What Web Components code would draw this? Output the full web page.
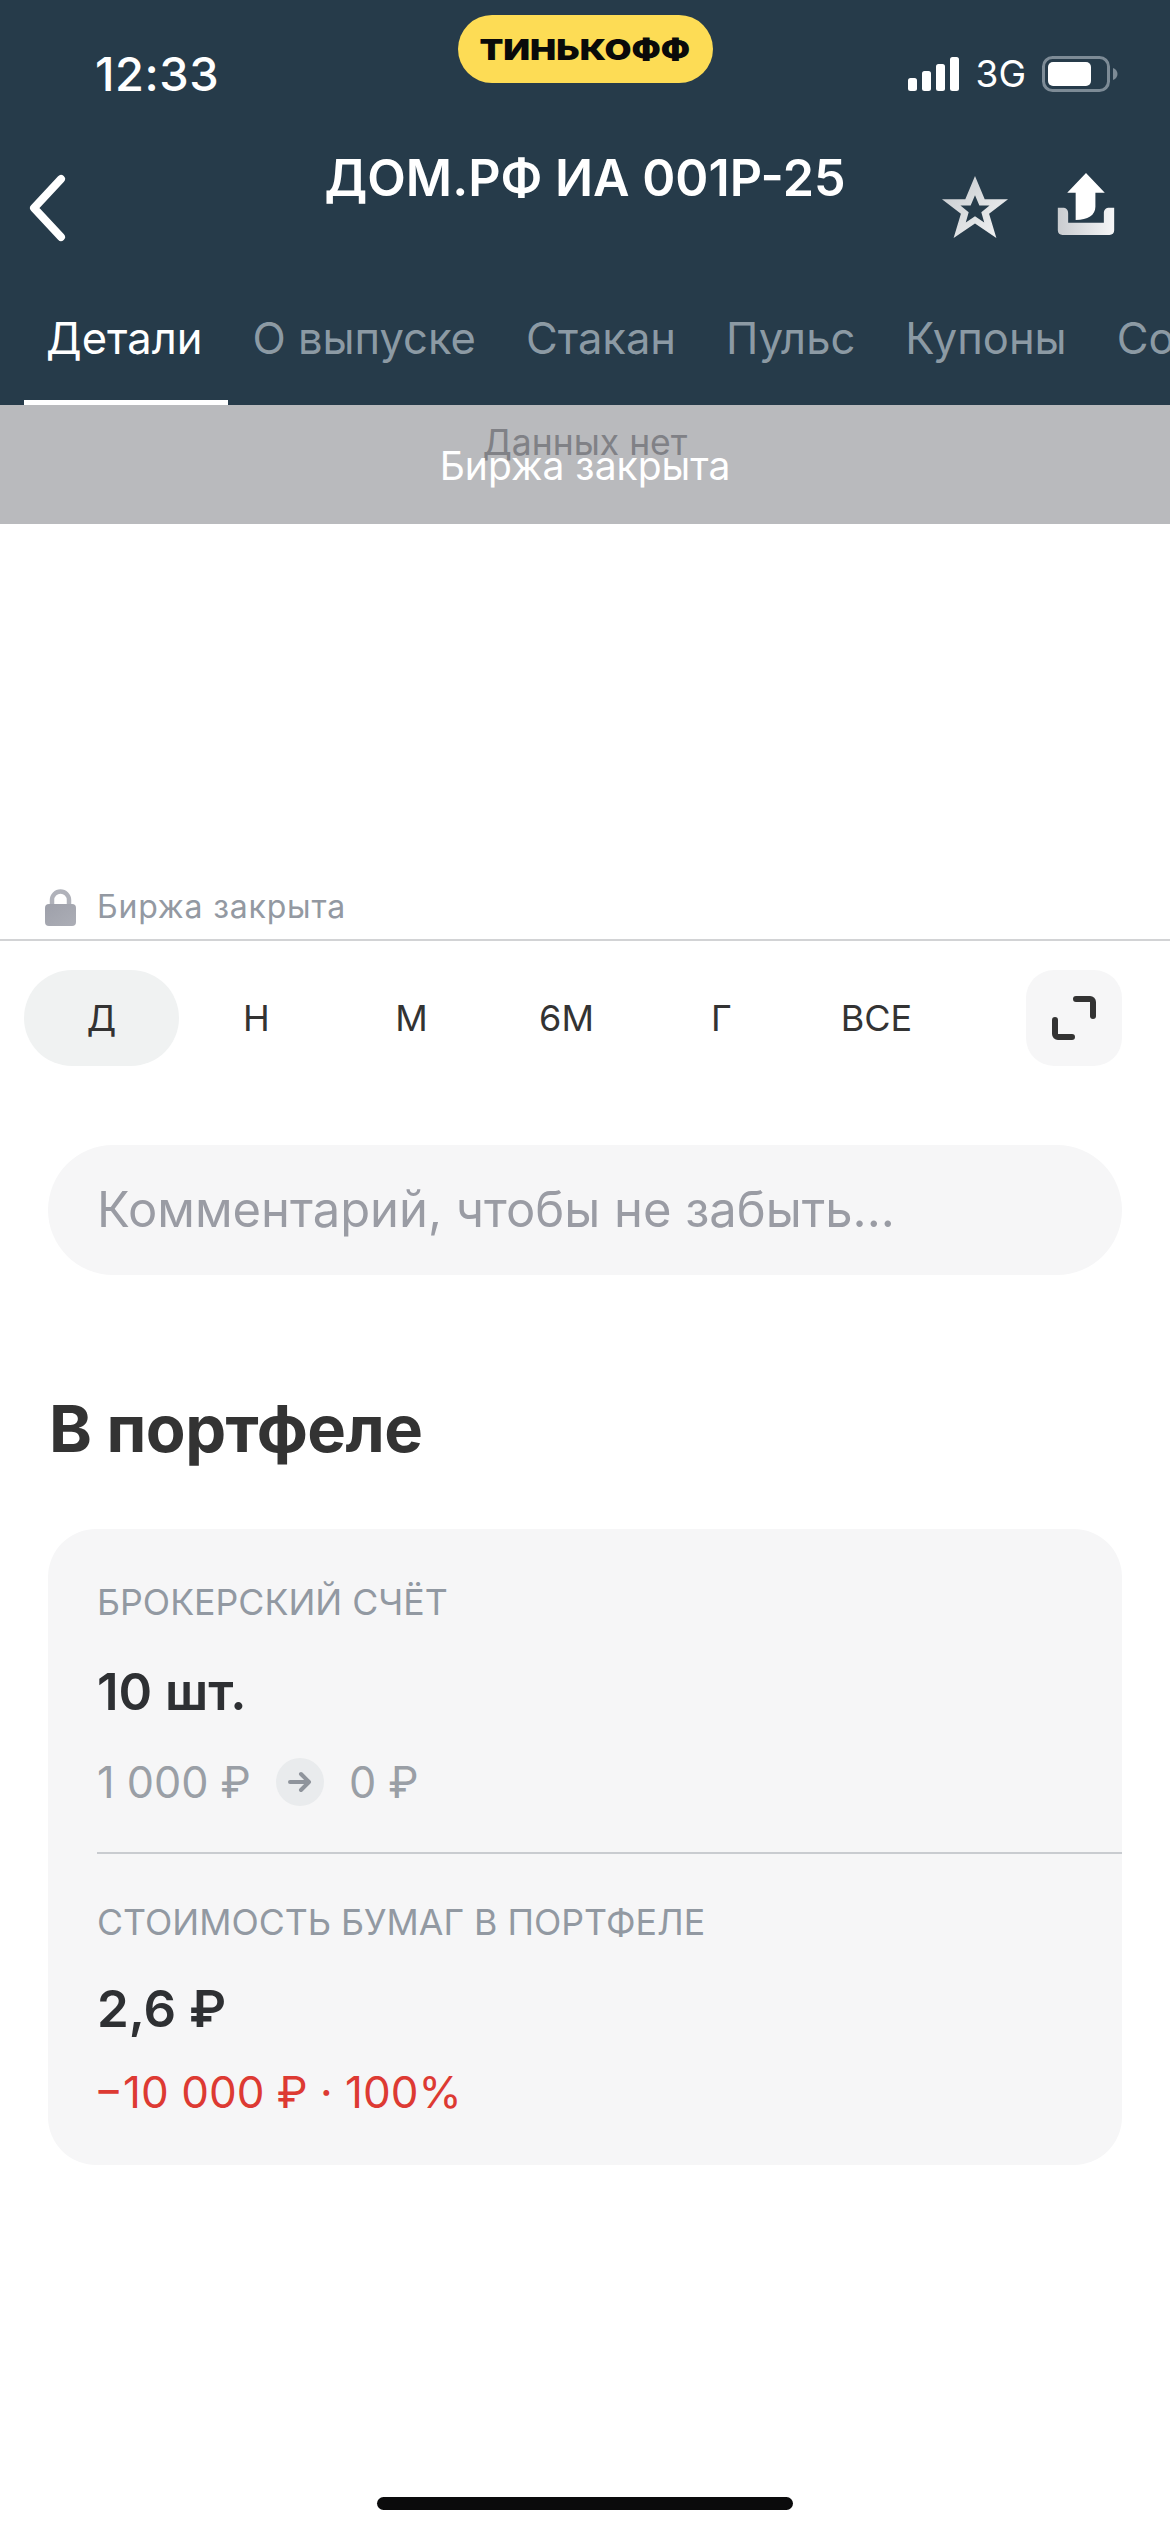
<!DOCTYPE html>
<html lang="ru"><head><meta charset="utf-8"><title>ДОМ.РФ ИА 001Р-25</title>
<style>
html,body{margin:0;padding:0;background:#fff}
body{width:1170px;height:2532px;overflow:hidden;font-family:Inter,"Noto Sans",sans-serif;display:flex;flex-direction:column}
</style></head><body>
<app-header></app-header>
<market-banner></market-banner>
<chart-footer></chart-footer>
<period-picker></period-picker>
<comment-field></comment-field>
<portfolio-section></portfolio-section>
<home-indicator></home-indicator>
<script>
const def=(name,html)=>customElements.define(name,class extends HTMLElement{
  constructor(){super();this.attachShadow({mode:'open'}).innerHTML=html}
});
def('status-bar',`<style>
:host{display:grid;grid-template-columns:1fr 255px 1fr;height:100px;color:#fff}
.t{font:500 47px/54px Inter,sans-serif;margin:47px 0 0 95px;letter-spacing:.5px}
.pill{margin-top:15px;height:68px;border-radius:34px;background:#fddc55;color:#0a0a0a;display:flex;align-items:center;justify-content:center;font:900 29px/1 Inter,sans-serif;letter-spacing:0}
.pill span{display:inline-block;transform:scaleX(1.2)}
.r{display:flex;justify-content:flex-end;align-items:flex-start;padding:56px 52px 0 0}
.g{font:400 37px/38px Inter,sans-serif;margin:-1px 16px 0 17px}
svg{display:block}
</style>
<div class="t">12:33</div><div class="pill"><span>ТИНЬКОФФ</span></div>
<div class="r"><svg width="51" height="36" viewBox="0 0 51 36"><g fill="#fff"><rect x="0" y="22" width="9" height="13" rx="2.5"/><rect x="14" y="15" width="9" height="20" rx="2.5"/><rect x="28" y="8" width="9" height="27" rx="2.5"/><rect x="42" y="1" width="9" height="34" rx="2.5"/></g></svg>
<span class="g">3G</span>
<svg width="76" height="36" viewBox="0 0 76 36"><rect x="1.5" y="1.5" width="65" height="33" rx="9" fill="none" stroke="#7d8b96" stroke-width="3"/><rect x="6" y="6" width="43" height="24" rx="5" fill="#fff"/><path d="M71 12c3 1 4.500 3.500 4.500 6s-1.500 5-4.500 6z" fill="#7d8b96"/></svg></div>`);
def('nav-bar',`<style>
:host{display:block;position:relative;height:200px;color:#fff}
h1{margin:0;text-align:center;font:600 50.200px/60px Inter,sans-serif;padding-top:48px}
.back,.act{position:absolute;display:block}
.back{left:26px;top:72px}.star{left:941px;top:74px}.up{left:1055px;top:73px}
</style><svg class="back act" width="44" height="72" viewBox="0 0 44 72"><path d="M35 7 8 36l27 29" fill="none" stroke="#fff" stroke-width="8" stroke-linecap="round" stroke-linejoin="round"/></svg>
<h1>ДОМ.РФ ИА 001Р-25</h1>
<svg class="star act" width="68" height="66" viewBox="0 0 70 66"><defs><linearGradient id="g1" x1="0" x2="1" y1="0" y2="1"><stop offset="0" stop-color="#c4c8cc"/><stop offset="1" stop-color="#f4f5f6"/></linearGradient></defs><path fill="url(#g1)" fill-rule="evenodd" d="M35 1l10 24h24L49.500 40 57 65 35 50 13 65l7.500-25L1 25h24zM35 21l-4.500 10.500H20l8.500 7-3 10.500 9.500-6.500 9.500 6.500-3-10.500 8.500-7H39.500z"/></svg>
<svg class="up act" width="62" height="62" viewBox="0 0 64 66"><defs><linearGradient id="g2" x1="0" x2="1"><stop offset="0" stop-color="#c9ccd0"/><stop offset="1" stop-color="#f5f6f7"/></linearGradient></defs><path fill="#fff" d="M32 0 52 21H42v15c0 9-8 14-21 14V21H12z"/><path fill="url(#g2)" d="M2 37h5c4 0 6 2 6 6v10h38V43c0-4 2-6 6-6h5v24c0 3-2 5-5 5H7c-3 0-5-2-5-5z"/></svg>`);
def('tab-item',`<style>
:host{display:block;height:105px;padding:0 26px 0 22px;flex:none;box-sizing:border-box;font:400 43.5px/76px Inter,sans-serif;color:#8c9aa4;white-space:nowrap}
:host([active]){color:#fff;box-shadow:inset 0 -5px 0 #fff}
</style><slot></slot>`);
def('tab-bar',`<style>:host{display:flex;gap:2px;padding:0 0 0 24px;overflow:hidden;height:105px}</style><slot></slot>`);
def('app-header',`<style>:host{display:block;background:#263b4a;height:405px;flex:none}</style>
<status-bar></status-bar><nav-bar></nav-bar>
<tab-bar><tab-item active>Детали</tab-item><tab-item>О выпуске</tab-item><tab-item>Стакан</tab-item><tab-item>Пульс</tab-item><tab-item>Купоны</tab-item><tab-item>Со</tab-item></tab-bar>`);
def('market-banner',`<style>
:host{display:flex;position:relative;justify-content:center;align-items:center;height:119px;background:#b9babd;flex:none;color:#fff;font:400 39px/44px Inter,sans-serif}
.u{position:absolute;left:0;right:0;top:16px;text-align:center;color:#808186;font-size:35.500px}
.o{position:relative;top:1px}
</style><div class="u">Данных нет</div><div class="o">Биржа закрыта</div>`);
def('chart-footer',`<style>
:host{display:flex;align-items:flex-end;gap:21px;height:417px;box-sizing:border-box;padding:0 0 12px 45px;border-bottom:2px solid #d2d3d5;flex:none;color:#9399a2;font:400 32px/40px Inter,sans-serif;letter-spacing:.8px}
svg{display:block;margin-bottom:1px}
</style><svg width="31" height="37" viewBox="0 0 31 37"><defs><linearGradient id="l" x1="0" x2="1" y1="0" y2="1"><stop offset="0" stop-color="#9ea0aa"/><stop offset="1" stop-color="#acaeb6"/></linearGradient></defs><path d="M7 17V11a8.500 8.500 0 0 1 17 0v6" fill="none" stroke="#b0b2ba" stroke-width="4.500"/><rect x="0" y="15" width="31" height="22" rx="4" fill="url(#l)"/></svg><span>Биржа закрыта</span>`);
def('period-picker',`<style>
:host{display:flex;align-items:stretch;height:96px;margin-top:29px;padding:0 48px 0 24px;flex:none;color:#333;font:400 36px/96px Inter,sans-serif}
.p{width:155px;text-align:center}
.a{background:#f0f2f2;border-radius:48px}
.s{flex:1}
.e{width:96px;border-radius:28px;background:#f6f6f7;display:flex;align-items:center;justify-content:center}
</style><div class="p a">Д</div><div class="p">Н</div><div class="p">М</div><div class="p">6М</div><div class="p">Г</div><div class="p">ВСЕ</div><div class="s"></div>
<div class="e"><svg width="44" height="44" viewBox="0 0 44 44"><path d="M24 3h14a3 3 0 0 1 3 3v14M3 24v14a3 3 0 0 0 3 3h14" fill="none" stroke="#333" stroke-width="6" stroke-linecap="round"/></svg></div>`);
def('comment-field',`<style>
:host{display:block;height:130px;margin:79px 48px 0;padding-left:49px;border-radius:65px;background:#f6f6f7;flex:none;color:#9a9ca4;font:400 48.900px/130px Inter,sans-serif}
</style>Комментарий, чтобы не забыть...`);
def('holding-row',`<style>
:host{display:block;padding-left:49px;color:#2e3033}
.l{font:400 35.700px/44px Inter,sans-serif;color:#9299a2;padding-top:51px}
:host(:last-child) .l{padding-top:46px}
.v{font:600 51px/60px Inter,sans-serif;margin-top:38px}
:host(:last-child) .v{margin-top:35px}
</style><div class="l"><slot name="label"></slot></div><div class="v"><slot name="value"></slot></div><slot></slot>`);
def('change-arrow',`<style>:host{display:inline-flex;width:48px;height:48px;border-radius:50%;background:#e9ebed;align-items:center;justify-content:center}</style>
<svg width="26" height="22" viewBox="0 0 26 22"><path d="M3 11h19M14 3l8 8-8 8" fill="none" stroke="#8f949c" stroke-width="4" stroke-linecap="round" stroke-linejoin="round"/></svg>`);
def('portfolio-section',`<style>
:host{display:block;flex:none;padding:0 48px}
h2{margin:116px 0 0 1px;font:700 65px/76px Inter,sans-serif;color:#333;letter-spacing:-.5px}
.c{margin-top:62px;height:636px;border-radius:48px;background:#f6f6f7;box-sizing:border-box;overflow:hidden}
.m{display:flex;align-items:center;font:400 43.200px/56px Inter,sans-serif;color:#9a9fa6;margin-top:32px}
.m change-arrow{margin:0 25px 0 25px}
.d{height:2px;background:#c9ccd0;margin:42px 0 0 49px}
.n{font:400 44px/54px Inter,sans-serif;color:#dd3a33;margin:26px 0 0 -3px}
</style><h2>В портфеле</h2><div class="c">
<holding-row><span slot="label">БРОКЕРСКИЙ СЧЁТ</span><span slot="value">10 шт.</span>
<div class="m"><span>1 000 ₽</span><change-arrow></change-arrow><span>0 ₽</span></div></holding-row>
<div class="d"></div>
<holding-row><span slot="label">СТОИМОСТЬ БУМАГ В ПОРТФЕЛЕ</span><span slot="value">2,6 ₽</span>
<div class="n">−10 000 ₽ · 100%</div></holding-row></div>`);
def('home-indicator',`<style>
:host{display:block;flex:none;width:416px;height:13px;border-radius:7px;background:#0b0b0c;margin:332px auto 0}
</style>`);
</script></body></html>
